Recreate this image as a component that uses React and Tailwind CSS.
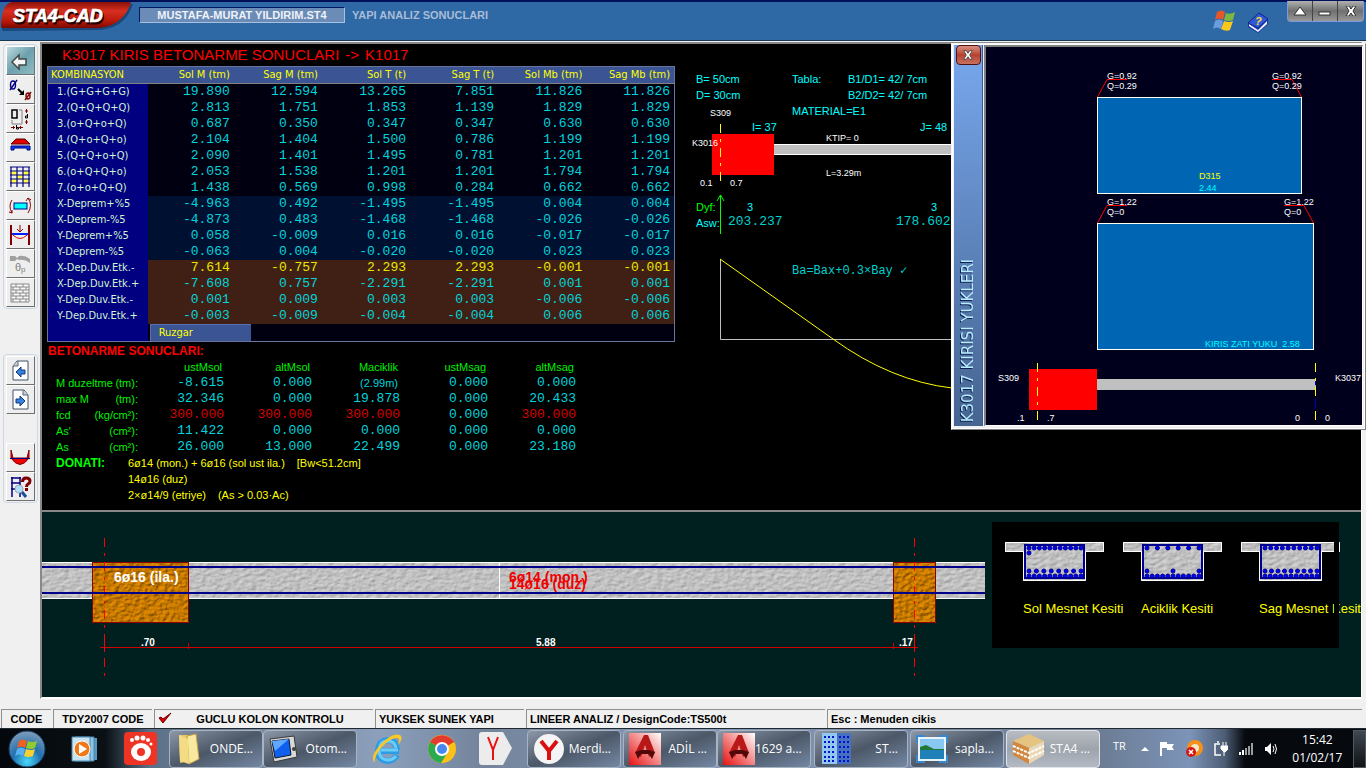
import React from "react";

const columns = ["Sol M (tm)", "Sag M (tm)", "Sol T (t)", "Sag T (t)", "Sol Mb (tm)", "Sag Mb (tm)"];

const combinations = [
  { name: "1.(G+G+G+G)", values: ["19.890", "12.594", "13.265", "7.851", "11.826", "11.826"] },
  { name: "2.(Q+Q+Q+Q)", values: ["2.813", "1.751", "1.853", "1.139", "1.829", "1.829"] },
  { name: "3.(o+Q+o+Q)", values: ["0.687", "0.350", "0.347", "0.347", "0.630", "0.630"] },
  { name: "4.(Q+o+Q+o)", values: ["2.104", "1.404", "1.500", "0.786", "1.199", "1.199"] },
  { name: "5.(Q+Q+o+Q)", values: ["2.090", "1.401", "1.495", "0.781", "1.201", "1.201"] },
  { name: "6.(o+Q+Q+o)", values: ["2.053", "1.538", "1.201", "1.201", "1.794", "1.794"] },
  { name: "7.(o+o+Q+Q)", values: ["1.438", "0.569", "0.998", "0.284", "0.662", "0.662"] },
  { name: "X-Deprem+%5", kind: "quake", values: ["-4.963", "0.492", "-1.495", "-1.495", "0.004", "0.004"] },
  { name: "X-Deprem-%5", kind: "quake", values: ["-4.873", "0.483", "-1.468", "-1.468", "-0.026", "-0.026"] },
  { name: "Y-Deprem+%5", kind: "quake", values: ["0.058", "-0.009", "0.016", "0.016", "-0.017", "-0.017"] },
  { name: "Y-Deprem-%5", kind: "quake", values: ["-0.063", "0.004", "-0.020", "-0.020", "0.023", "0.023"] },
  { name: "X-Dep.Duv.Etk.-", kind: "wall", active: true, values: ["7.614", "-0.757", "2.293", "2.293", "-0.001", "-0.001"] },
  { name: "X-Dep.Duv.Etk.+", kind: "wall", values: ["-7.608", "0.757", "-2.291", "-2.291", "0.001", "0.001"] },
  { name: "Y-Dep.Duv.Etk.-", kind: "wall", values: ["0.001", "0.009", "0.003", "0.003", "-0.006", "-0.006"] },
  { name: "Y-Dep.Duv.Etk.+", kind: "wall", values: ["-0.003", "-0.009", "-0.004", "-0.004", "0.006", "0.006"] },
];

const rowColors = {
  quake: "bg-[#001030]",
  wall: "bg-[#402014]",
};

const results = [
  { name: "M duzeltme", unit: "(tm):", values: ["-8.615", "0.000", "(2.99m)", "0.000", "0.000"] },
  { name: "max M", unit: "(tm):", values: ["32.346", "0.000", "19.878", "0.000", "20.433"] },
  { name: "fcd", unit: "(kg/cm²):", values: ["300.000", "300.000", "300.000", "0.000", "300.000"] },
  { name: "As'", unit: "(cm²):", values: ["11.422", "0.000", "0.000", "0.000", "0.000"] },
  { name: "As", unit: "(cm²):", values: ["26.000", "13.000", "22.499", "0.000", "23.180"] },
];

const sans = "font-['Liberation_Sans',sans-serif]";
const mono = "font-['Liberation_Mono',monospace]";
const tahoma = "font-['DejaVu_Sans_Condensed','DejaVu_Sans',sans-serif]";

/* ---------- header ---------- */

const Header = () => (
  <header className={`flex h-[41px] items-start border-t-2 border-b border-t-[#001058] border-b-[#183858] bg-[#2e69a6] ${sans}`}>
    <svg width="134" height="30" className="shrink-0" role="img" aria-label="STA4-CAD">
      <defs>
        <linearGradient id="logoRed" x1="0" y1="0" x2="0" y2="1">
          <stop offset="0" stopColor="#8c1008" />
          <stop offset="0.35" stopColor="#d83020" />
          <stop offset="0.75" stopColor="#b81808" />
          <stop offset="1" stopColor="#780800" />
        </linearGradient>
      </defs>
      <path d="M3 29 Q1 28 2 20 Q3 3 12 2 L133 2 Q129 15 119 22 Q109 28 96 28 Z" fill="#123a68" opacity="0.7" />
      <path d="M2 26 Q0 24 2 14 Q4 1 12 0 L131 0 Q128 12 117 20 Q108 26 95 26 Z" fill="url(#logoRed)" />
      <g fontSize="18" fontWeight="bold" fontStyle="italic">
        <text x="14" y="22" fill="#200" stroke="#200">STA4-CAD</text>
        <text x="13" y="20" fill="#fff" stroke="#fff" strokeWidth="0.7">STA4-CAD</text>
      </g>
    </svg>
    <div className="mt-[5px] ml-[5px] w-[206px] border border-t-[#001868] border-l-[#001868] border-r-[#a8c0e0] border-b-[#a8c0e0] bg-[#6c8cb8] text-center text-[11px] leading-[14px] font-bold text-[#eef2f8]">
      MUSTAFA-MURAT YILDIRIM.ST4
    </div>
    <h1 className="mt-[6px] ml-[7px] text-[11px] leading-[14px] font-bold text-[#a9bcd6]">YAPI ANALIZ SONUCLARI</h1>
    <div className="mt-[6px] ml-auto mr-[18px] flex gap-[10px]">
      <svg width="24" height="24" viewBox="0 0 24 24">
        <path d="M4 4 Q8 1 12 4 L10 12 Q6 9 2 12 Z" fill="#e8562c" />
        <path d="M13 5 Q17 7 22 4 L20 12 Q16 14 11 12 Z" fill="#7cb840" />
        <path d="M2 13 Q6 10 10 13 L8 21 Q4 18 0 21 Z" fill="#6c9ce0" />
        <path d="M11 13 Q16 15 20 13 L17 22 Q13 24 8 21 Z" fill="#f8c81c" />
      </svg>
      <svg width="22" height="24" viewBox="0 0 22 24" className="mt-[2px]">
        <path d="M1 13 L13 3 L21 9 L21 14 L11 23 L1 17 Z" fill="#1838a8" />
        <path d="M2 14 L11 20 L20 11 L20 14 L11 22 L2 16 Z" fill="#f4f4ff" />
        <path d="M1 13 L12 3 L21 9 L11 18 Z" fill="#3058d8" stroke="#102888" />
        <text x="8" y="15" fontSize="11" fontWeight="bold" fontStyle="italic" fill="#f8e020">?</text>
      </svg>
    </div>
    <div className="mr-[2px] -mt-[1px] flex h-[21px] rounded-b border border-t-0 border-[#8098e0] bg-[#383838]">
      {["up", "min", "close"].map((kind) => (
        <button
          key={kind}
          aria-label={kind}
          className="flex w-[25px] items-center justify-center border-r border-[#404448] bg-gradient-to-b from-[#b0b0b0] via-[#707070] to-[#989898] last:border-r-0"
        >
          <svg width="14" height="10" viewBox="0 0 14 10" stroke="#303030" strokeWidth="1" fill="#fff">
            {kind === "up" && <path d="M7 1 L13 9 H1 Z" />}
            {kind === "min" && <rect x="1" y="6" width="11" height="3" />}
            {kind === "close" && <path d="M2 0 H5 L7 3 L9 0 H12 L9 5 L12 10 H9 L7 7 L5 10 H2 L5 5 Z" />}
          </svg>
        </button>
      ))}
    </div>
  </header>
);

/* ---------- left tool bar ---------- */

const icons = {
  back: (
    <path d="M4 13 L11 6 V10 H18 V16 H11 V20 Z" fill="#f4f4f4" stroke="#404848" strokeWidth="1.5" />
  ),
  rename: (
    <g fill="none" strokeWidth="1.4">
      <ellipse cx="5" cy="7" rx="2.5" ry="4" stroke="#000080" />
      <path d="M2 12 L9 2" stroke="#000080" />
      <ellipse cx="20" cy="18" rx="2" ry="3" stroke="#800000" />
      <path d="M17 22 L23 14" stroke="#800000" />
      <path d="M10 11 L14 15" stroke="#000" strokeWidth="2" />
      <path d="M16 17 L11 17 L16 12 Z" fill="#000" stroke="none" />
    </g>
  ),
  section: (
    <g fill="none">
      <rect x="4" y="3" width="5" height="8" stroke="#000" strokeWidth="1.5" />
      <path d="M11 3 H14 V17 H4 V13" stroke="#808080" />
      <path d="M18.5 2 V6 M17 4 H20 M18.5 13 V17 M17 15 H20 M3 20.5 H7 M5.5 19 V22 M11 20.5 H15 M12.5 19 V22" stroke="#800000" />
      <path d="M8.5 18 V22 M8.5 20.5 H10.5 V22 H8.5" stroke="#000" />
      <path d="M19.5 7 V11 M19.5 11 H17.5 V9 H19.5" stroke="#000" />
    </g>
  ),
  slab: (
    <g>
      <path d="M3 8 L8 3 H17 L22 8 Z" fill="#e00000" stroke="#600000" />
      <path d="M3 10 H22 V14 H19 V12 H6 V14 H3 Z" fill="#0040ff" stroke="#000080" />
    </g>
  ),
  grid: (
    <g stroke="#000080" strokeWidth="1.2">
      <path d="M3 6h6v4H3z M15 6h6v4h-6z M9 10h6v4H9z M3 14h6v4H3z M15 14h6v4h-6z" fill="#ffff40" stroke="none" />
      <path d="M3 2 V22 M9 2 V22 M15 2 V22 M21 2 V22 M2 2 H22 M2 6 H22 M2 10 H22 M2 14 H22 M2 18 H22" fill="none" />
    </g>
  ),
  moment: (
    <g fill="none">
      <rect x="6" y="9" width="13" height="6" fill="#00ffff" stroke="#000080" />
      <path d="M4 6 Q0 12 4 19 M1 18 L4 19 V16 M20 4 Q25 11 20 19 M18 7 L20 4 L23 6" stroke="#900000" />
    </g>
  ),
  frame: (
    <g fill="none">
      <path d="M3 2 V22 M21 2 V22" stroke="#800000" strokeWidth="2" />
      <path d="M4 11 H20" stroke="#0020ff" strokeWidth="2" />
      <path d="M5 12 Q12 19 19 12" stroke="#e00000" />
      <path d="M12 2 V9 M9 6 L12 9 L15 6" stroke="#900000" />
    </g>
  ),
  hinge: (
    <g>
      <path d="M2 4 H7 L9 6 L11 4 Q17 3 22 7 V11 Q17 7 11 8 L9 7 L7 9 H2 Z" fill="#a0a0a0" />
      <text x="7" y="19" fontSize="11" fill="#808080">θ</text>
      <text x="13" y="20" fontSize="8" fill="#808080">p</text>
    </g>
  ),
  wall: (
    <path
      d="M3 3H21V21H3Z M3 6H21 M3 9H21 M3 12H21 M3 15H21 M3 18H21 M8 3V6 M15 3V6 M5 6V9 M12 6V9 M18 6V9 M8 9V12 M15 9V12 M5 12V15 M12 12V15 M18 12V15 M8 15V18 M15 15V18 M5 18V21 M12 18V21 M18 18V21"
      fill="#f8f8f8"
      stroke="#888"
    />
  ),
  prev: (
    <g>
      <path d="M9 2 H20 V21 H5 V7 Z" fill="#fff" stroke="#405068" />
      <path d="M5 7 H10 V2" fill="#c8d0dc" stroke="#606878" />
      <path d="M8 13 L13 8 V11 H17 V15 H13 V18 Z" fill="#3880e0" stroke="#103878" />
    </g>
  ),
  next: (
    <g>
      <path d="M5 2 H16 L20 7 V21 H5 Z" fill="#fff" stroke="#405068" />
      <path d="M15 2 V7 H20" fill="#c8d0dc" stroke="#606878" />
      <path d="M17 13 L12 8 V11 H8 V15 H12 V18 Z" fill="#3880e0" stroke="#103878" />
    </g>
  ),
  diagram: (
    <g>
      <path d="M3 4 L5 12 H19 L21 4 V12 Q12 25 3 12 Z" fill="#f00000" stroke="#800000" />
      <path d="M2 12.5 H22" stroke="#000080" />
    </g>
  ),
  query: (
    <g fill="none">
      <path d="M4 2 V22 M12 2 V22 M3 3 H13 M3 8 H12 M3 14 H10" stroke="#000080" strokeWidth="1.5" />
      <path d="M14.5 7 Q14.5 3 18 3 Q22 3 22 6 Q22 8 20 9 Q18.5 10 18.5 12" stroke="#800000" strokeWidth="3" />
      <rect x="17" y="13" width="3" height="3" fill="#800000" />
      <circle cx="11" cy="14" r="4" fill="#b0e0f8" stroke="#a0a8b0" />
      <path d="M14 17 L18 22" stroke="#1850a0" strokeWidth="3" />
    </g>
  ),
};

const ToolButton = ({ icon, active }) => (
  <button
    aria-label={icon}
    className={`flex h-[29px] w-[29px] items-center justify-center border border-t-white border-l-white border-r-[#707070] border-b-[#707070] ${sans} ${
      active ? "bg-gradient-to-br from-[#c0dce0] via-[#6ca0ac] to-[#90bcc4]" : "bg-[#eeeeee]"
    }`}
  >
    <svg width="24" height="24" viewBox="0 0 24 24">
      {icons[icon]}
    </svg>
  </button>
);

const Sidebar = () => (
  <nav className="flex w-10 shrink-0 flex-col items-center pt-[3px]">
    <div className="rounded border border-[#ccd8e4] p-px px-[2px]">
      {["back", "rename", "section", "slab", "grid", "moment", "frame", "hinge", "wall"].map((name) => (
        <ToolButton key={name} icon={name} active={name === "back"} />
      ))}
    </div>
    <div className="mt-[45px] flex flex-col gap-[29px] rounded border border-[#ccd8e4] p-px px-[2px]">
      <div>
        <ToolButton icon="prev" />
        <ToolButton icon="next" />
      </div>
      <div>
        <ToolButton icon="diagram" />
        <ToolButton icon="query" />
      </div>
    </div>
  </nav>
);

/* ---------- tables ---------- */

const CombinationTable = () => (
  <table className={`ml-[5px] w-[628px] table-fixed border-collapse border border-[#68749c] text-[11px] leading-4 ${tahoma}`}>
    <colgroup>
      <col className="w-[100px]" />
      <col className="w-[86px]" />
      <col span="5" className="w-[88px]" />
    </colgroup>
    <thead>
      <tr className="h-[17px] border-b border-[#808080] bg-[#3a5494] text-[#ffff00]">
        <th scope="col" className="pl-[3px] text-left font-normal">KOMBINASYON</th>
        {columns.map((name) => (
          <th key={name} scope="col" className="pr-1 text-right font-normal whitespace-nowrap">
            {name}
          </th>
        ))}
      </tr>
    </thead>
    <tbody>
      {combinations.map((row) => (
        <tr key={row.name} className={`h-4 ${rowColors[row.kind] || "bg-[#000010]"}`}>
          <th scope="row" className="bg-[#000080] pl-[9px] text-left font-normal whitespace-nowrap text-[#d0f4d0]">
            {row.name}
          </th>
          {row.values.map((value, i) => (
            <td
              key={i}
              className={`pr-1 text-right text-[13px] leading-4 ${mono} ${row.active ? "text-[#e8e800]" : "text-[#00d4dc]"}`}
            >
              {value}
            </td>
          ))}
        </tr>
      ))}
      <tr className="h-[17px] bg-[#000010]">
        <th className="bg-[#000080]"></th>
        <td colSpan="6" className="pl-[2px]">
          <button className="block w-[101px] border-t border-l border-[#5870b0] bg-[#3a5494] pl-2 text-left text-[#ffff00]">
            Ruzgar
          </button>
        </td>
      </tr>
    </tbody>
  </table>
);

const ResultTable = () => (
  <table className="ml-[14px] w-[522px] table-fixed border-collapse text-[11px] leading-4">
    <colgroup>
      <col className="w-[58px]" />
      <col className="w-[24px]" />
      <col span="5" className="w-[88px]" />
    </colgroup>
    <thead>
      <tr className="text-[#00f000]">
        <td colSpan="2"></td>
        {["ustMsol", "altMsol", "Maciklik", "ustMsag", "altMsag"].map((name) => (
          <th key={name} scope="col" className="pr-1 text-right font-normal">
            {name}
          </th>
        ))}
      </tr>
    </thead>
    <tbody>
      {results.map((row) => (
        <tr key={row.name}>
          <th scope="row" colSpan="2" className="text-left font-normal text-[#00f000]">
            <span className="flex justify-between whitespace-nowrap">
              <span>{row.name}</span>
              <span>{row.unit}</span>
            </span>
          </th>
          {row.values.map((value, i) => (
            <td
              key={i}
              className={`text-right leading-4 ${
                value.includes("m") ? "pr-1 text-[11px]" : `pr-[2px] text-[13px] ${mono}`
              } ${value === "300.000" ? "text-[#d80000]" : "text-[#00d4dc]"}`}
            >
              {value}
            </td>
          ))}
        </tr>
      ))}
    </tbody>
  </table>
);

/* ---------- drawings ---------- */

// elevation of the beam with moment diagram
const BeamElevation = () => (
  <svg className={`min-w-0 flex-1 ${sans}`} height="400" fontSize="11" fill="#00ffff">
    <text x="20" y="39">B= 50cm</text>
    <text x="20" y="55">D= 30cm</text>
    <text x="116" y="39">Tabla:</text>
    <text x="172" y="39">B1/D1= 42/ 7cm</text>
    <text x="172" y="55">B2/D2= 42/ 7cm</text>
    <text x="116" y="71">MATERIAL=E1</text>
    <text x="76" y="87">I= 37</text>
    <text x="244" y="87">J= 48</text>
    <rect x="36" y="90" width="62" height="41" fill="#ff0000" />
    <rect x="98" y="100" width="500" height="11" fill="#fff" />
    <rect x="98" y="101" width="500" height="9" fill="#c0c0c0" />
    <path d="M44.5 80 V137" stroke="#ffff00" strokeDasharray="9 6 3 6" />
    <g fontSize="9" fill="#fff">
      <text x="34" y="72">S309</text>
      <text x="16" y="102">K3016</text>
      <text x="150" y="97">KTIP= 0</text>
      <text x="150" y="132">L=3.29m</text>
      <text x="24" y="142">0.1</text>
      <text x="54" y="142">0.7</text>
    </g>
    <path d="M44.5 190 V151 M41 157 L44.5 151 L48 157" stroke="#00ff00" fill="none" />
    <text x="20" y="167" fill="#00ff00">Dyf:</text>
    <text x="20" y="183">Asw:</text>
    <text x="71" y="167">3</text>
    <text x="255" y="167">3</text>
    <g className={mono} fill="#00d0d0">
      <text x="52" y="181" fontSize="13">203.237</text>
      <text x="220" y="181" fontSize="13">178.602</text>
      <text x="116" y="230" fontSize="12">Ba=Bax+0.3×Bay ✓</text>
    </g>
    <path d="M44.5 215 V295.5 H600" stroke="#c0c0c0" fill="none" />
    <path d="M44 215 L157 295 Q215 337 276 344" stroke="#ffff00" fill="none" />
  </svg>
);

const LoadWindow = () => (
  <section className="absolute top-[2px] right-0 flex h-[387px] w-[415px] border border-t-[#f8f8f8] border-l-[#f8f8f8] border-r-[#808080] border-b-[#808080] bg-[#f0f0f4] p-[2px] pt-px pb-[3px] shadow-[inset_0_0_0_1px_#fff]">
    <div className="flex w-[29px] flex-col items-center justify-between border-r border-[#3858a0] bg-gradient-to-b from-[#78a8ee] to-[#466490] pb-1">
      <button
        aria-label="Kapat"
        className="flex h-5 w-[25px] items-center justify-center rounded-sm border border-[#501010] bg-gradient-to-b from-[#d89080] via-[#b84030] to-[#c87060]"
      >
        <svg width="12" height="10" viewBox="0 0 14 10" stroke="#404040" fill="#fff">
          <path d="M2 0 H5 L7 3 L9 0 H12 L9 5 L12 10 H9 L7 7 L5 10 H2 L5 5 Z" />
        </svg>
      </button>
      <h2 className="rotate-180 font-['DejaVu_Sans',sans-serif] text-[15px] leading-4 whitespace-nowrap text-[#b8ecff] [text-shadow:-1px_-1px_0_#102050] [writing-mode:vertical-rl]">
        K3017 KIRISI YUKLERI
      </h2>
    </div>
    <div className="ml-px flex-1 border-t-2 border-l-2 border-r border-b border-t-[#808080] border-l-[#808080] border-r-white border-b-white bg-[#00001c]">
      <svg width="100%" height="378" className={sans} fontSize="9" fill="#fff">
        <g stroke="#fffff0" fill="#0066b3">
          <rect x="111.5" y="50.5" width="204" height="96" />
          <rect x="111.5" y="176.5" width="216" height="126" />
        </g>
        <g stroke="#ff0000" fill="none">
          <path d="M111.5 50 L121 32.5 H141" />
          <path d="M315.5 50 L306 32.5 H286" />
          <path d="M111.5 176 L121 158.5 H141" />
          <path d="M327.5 176 L318 158.5 H298" />
        </g>
        <text x="121" y="32">G=0.92</text>
        <text x="121" y="42">Q=0.29</text>
        <text x="286" y="32">G=0.92</text>
        <text x="286" y="42">Q=0.29</text>
        <text x="121" y="158">G=1.22</text>
        <text x="121" y="168">Q=0</text>
        <text x="298" y="158">G=1.22</text>
        <text x="298" y="168">Q=0</text>
        <text x="213" y="132" fill="#ffff00">D315</text>
        <text x="213" y="144" fill="#00ffff">2.44</text>
        <text x="219" y="300" fill="#00ffff" xmlSpace="preserve">KIRIS ZATI YUKU  2.58</text>
        <rect x="43" y="322" width="68" height="41" fill="#ff0000" />
        <rect x="111" y="332" width="219" height="11" fill="#c0c0c0" />
        <path d="M51.5 316 V373 M329.5 316 V373" stroke="#ffff00" strokeDasharray="9 6 3 6" />
        <path d="M329.5 334 V338 M329.5 352 V362" stroke="#0000c0" />
        <text x="12" y="334">S309</text>
        <text x="349" y="334">K3037</text>
        <text x="31" y="374">.1</text>
        <text x="61" y="374">.7</text>
        <text x="309" y="374">0</text>
        <text x="339" y="374">0</text>
      </svg>
    </div>
  </section>
);

const Textures = () => (
  <defs>
    <filter id="concrete" x="0" y="0" width="1" height="1" colorInterpolationFilters="sRGB">
      <feTurbulence type="fractalNoise" baseFrequency="0.16 0.3" numOctaves="3" seed="4" result="noise" />
      <feDiffuseLighting in="noise" lightingColor="#dedede" surfaceScale="0.7" result="light">
        <feDistantLight azimuth="225" elevation="60" />
      </feDiffuseLighting>
      <feComposite in="light" in2="SourceGraphic" operator="in" />
    </filter>
    <filter id="column" x="0" y="0" width="1" height="1" colorInterpolationFilters="sRGB">
      <feTurbulence type="fractalNoise" baseFrequency="0.2 0.3" numOctaves="3" seed="9" result="noise" />
      <feDiffuseLighting in="noise" lightingColor="#ec9000" surfaceScale="1.5" result="light">
        <feDistantLight azimuth="225" elevation="58" />
      </feDiffuseLighting>
      <feComposite in="light" in2="SourceGraphic" operator="in" />
    </filter>
  </defs>
);

const BeamReinforcement = () => (
  <svg className={`w-[943px] shrink-0 ${sans}`} height="185" fontWeight="bold">
    <Textures />
    <rect x="0" y="50" width="943" height="37" fill="#c0c0c0" filter="url(#concrete)" />
    <path d="M0 50.5 H943 M0 86.5 H943 M457.5 50 V87" stroke="#fff" />
    <rect x="50" y="50" width="97" height="61" fill="#d08000" filter="url(#column)" />
    <rect x="851" y="50" width="43" height="61" fill="#d08000" filter="url(#column)" />
    <path d="M50.5 50.5 H146.5 V110.5 H50.5 Z M851.5 50.5 H893.5 V110.5 H851.5 Z" stroke="#900000" fill="none" />
    <path d="M62.5 26 V164 M872.5 26 V164" stroke="#ff0000" strokeDasharray="9 6 3 6" />
    <path d="M0 55 H943 M0 81 H943" stroke="#000088" strokeWidth="2" />
    <path d="M58 135.5 H876 M146.5 131 V137 M851.5 131 V137" stroke="#d00000" />
    <path d="M62.5 125 V140 M872.5 125 V140" stroke="#ff0000" />
    <text x="72" y="70" fontSize="14" fill="#fff">6ø16 (ila.)</text>
    <text x="467" y="70" fontSize="14" fill="#f00000">6ø14 (mon.)</text>
    <text x="467" y="77" fontSize="14" fill="#f00000">14ø16 (duz)</text>
    <g fontSize="10" fill="#fff">
      <text x="99" y="134">.70</text>
      <text x="494" y="134">5.88</text>
      <text x="857" y="134">.17</text>
    </g>
  </svg>
);

const sections = [
  {
    title: "Sol Mesnet Kesiti",
    bars: [
      { y: 36, count: 11 },
      { y: 41, count: 1 },
      { y: 59, count: 8 },
      { y: 64, count: 11 },
    ],
  },
  {
    title: "Aciklik Kesiti",
    bars: [
      { y: 36, count: 6 },
      { y: 59, count: 3 },
      { y: 64, count: 11 },
    ],
  },
  {
    title: "Sag Mesnet Kesiti",
    bars: [
      { y: 36, count: 10 },
      { y: 59, count: 9 },
      { y: 64, count: 11 },
    ],
  },
];

// bars are spread evenly between the two stirrup legs
const barX = (i, count) => (count === 1 ? 44 : 44 + (52 * i) / (count - 1));

const CrossSections = () => (
  <svg className={`min-w-0 flex-1 ${sans}`} height="185">
    <rect x="7" y="10" width="347" height="126" fill="#000" />
    {sections.map((section, s) => (
      <g key={section.title} transform={`translate(${s * 118} 0)`}>
        <path d="M20 30 H119 V40 H101 V69 H38 V40 H20 Z" fill="#c8c8c8" filter="url(#concrete)" />
        <path d="M20.5 30.5 H118.5 V39.5 H100.5 V68.5 H38.5 V39.5 H20.5 Z" fill="none" stroke="#fff" />
        <rect x="40" y="33" width="59" height="33" fill="none" stroke="#000090" strokeWidth="2" />
        {section.bars.map((row) =>
          Array.from({ length: row.count }, (_, i) => (
            <circle key={`${row.y}-${i}`} cx={barX(i, row.count)} cy={row.y} r="2" fill="#0000ff" stroke="#000090" />
          ))
        )}
        <text x="38" y="101" fontSize="13" fill="#ffff00">{section.title}</text>
      </g>
    ))}
    <rect x="349" y="10" width="5" height="126" fill="#000" />
  </svg>
);

/* ---------- status bar ---------- */

const cell = "border-t border-l border-[#909090]";

const StatusBar = () => (
  <footer className={`flex gap-[2px] pr-1 pl-px text-[11px] leading-[18px] font-bold text-black ${sans}`}>
    <div className={`${cell} w-[50px] text-center`}>CODE</div>
    <div className={`${cell} w-[99px] text-center whitespace-nowrap`}>TDY2007 CODE</div>
    <div className={`${cell} relative w-[219px] text-center`}>
      <svg width="14" height="12" viewBox="0 0 14 12" className="absolute top-[2px] left-[3px]">
        <path d="M1 6 L5 11 L13 1 L5 7 L3 5 Z" fill="#e00000" stroke="#700000" />
      </svg>
      <span className="pl-3">GUCLU KOLON KONTROLU</span>
    </div>
    <div className={`${cell} w-[149px] pl-[3px]`}>YUKSEK SUNEK YAPI</div>
    <div className={`${cell} w-[299px] pl-[3px]`}>LINEER ANALIZ / DesignCode:TS500t</div>
    <div className={`${cell} flex-1 pl-[3px]`}>Esc : Menuden cikis</div>
  </footer>
);

/* ---------- taskbar ---------- */

const TaskButton = ({ label, children, active }) => (
  <button
    className={`flex h-[38px] w-[94px] items-center justify-between rounded-sm border pr-[9px] pl-[5px] text-[12px] text-white ${
      active
        ? "border-[#e0e4e8] bg-gradient-to-b from-[#b8bcc2] via-[#9ea4ac] to-[#b4bac4]"
        : "border-[#a8b4c4] bg-gradient-to-br from-[#8c98a8] via-[#4c5868] to-[#7488a4]"
    }`}
  >
    {children}
    <span className="whitespace-nowrap">{label}</span>
  </button>
);

const CadIcon = () => (
  <svg width="32" height="32" viewBox="0 0 32 32" className="shrink-0">
    <defs>
      <linearGradient id="cadBg" x1="1" y1="0" x2="0" y2="1">
        <stop offset="0" stopColor="#fff" />
        <stop offset="1" stopColor="#e81010" />
      </linearGradient>
    </defs>
    <rect width="32" height="32" fill="url(#cadBg)" />
    <path d="M15 2 L19 2 L26 20 L20 24 L16 12 L12 24 L6 20 Z" fill="#b81818" />
    <path d="M6 19 L12 17 H20 L26 19 L23 26 L20 21 H12 L9 26 Z" fill="#500808" />
  </svg>
);

const Taskbar = () => (
  <div className="flex h-10 items-center border-t border-[#202830] bg-[linear-gradient(90deg,#04080c_0,#0a1014_105px,#5c7088_150px,#8ca0bc_380px,#74849c_480px,#8498b8_700px,#6c7c94_1100px,#7c94b8_1190px,#4c5c74_1225px,#060a0e_1245px,#060a0e_100%)] pl-2 font-['Open_Sans','Noto_Sans',sans-serif]">
    <button aria-label="Start">
      <svg width="38" height="38" viewBox="0 0 38 38">
        <defs>
          <radialGradient id="orb" cx="0.5" cy="0.85" r="0.8">
            <stop offset="0" stopColor="#48d8f8" />
            <stop offset="0.5" stopColor="#2070b0" />
            <stop offset="1" stopColor="#7898b8" />
          </radialGradient>
        </defs>
        <circle cx="19" cy="19" r="18" fill="url(#orb)" stroke="#18385c" />
        <path d="M11 11 Q15 8 19 11 L17 18 Q13 15 9 18 Z" fill="#f06020" />
        <path d="M20 11 Q24 13 29 11 L27 18 Q23 20 18 18 Z" fill="#90cc30" />
        <path d="M9 19 Q13 16 17 19 L15 26 Q11 23 7 26 Z" fill="#58b0f0" />
        <path d="M18 19 Q23 21 27 19 L25 26 Q21 28 16 26 Z" fill="#f8d030" />
      </svg>
    </button>
    <button aria-label="Media Player" className="ml-[25px]">
      <svg width="27" height="28" viewBox="0 0 27 28">
        <path d="M8 3 H26 V25 H8 Z" fill="#5898c0" />
        <path d="M4 2 H23 V26 H4 Z" fill="#90c4e0" stroke="#4888b0" />
        <path d="M1 2 H19 V26 H1 Z" fill="#c8e4f0" stroke="#4888b0" />
        <circle cx="11" cy="14" r="8" fill="#f07818" stroke="#fff" />
        <path d="M8 9 L16 14 L8 19 Z" fill="#fff" />
      </svg>
    </button>
    <button aria-label="GOM" className="ml-[26px]">
      <svg width="33" height="33" viewBox="0 0 33 33">
        <rect width="33" height="33" rx="4" fill="#ee3424" />
        <g fill="#fff">
          <circle cx="8" cy="8" r="2" />
          <circle cx="13" cy="6" r="2.5" />
          <circle cx="19" cy="6" r="2.5" />
          <circle cx="24" cy="8" r="2" />
          <circle cx="27" cy="12" r="1.5" />
          <ellipse cx="17" cy="20" rx="10" ry="9" />
        </g>
        <circle cx="17" cy="20" r="4" fill="#ee3424" />
      </svg>
    </button>
    <div className="ml-3 flex">
      <TaskButton label="ONDE...">
        <svg width="28" height="32" viewBox="0 0 28 32">
          <path d="M4 2 H14 L15 28 L5 30 Z" fill="#e8c860" />
          <path d="M12 3 L21 1 L24 26 L14 31 Z" fill="#f8e8a0" stroke="#c8a040" />
          <path d="M4 2 L13 6 L14 31 L5 28 Z" fill="#f4dc84" />
        </svg>
      </TaskButton>
      <TaskButton label="Otom...">
        <svg width="30" height="28" viewBox="0 0 30 28">
          <path d="M1 4 L25 1 L28 22 L5 27 Z" fill="#d8d8d8" stroke="#383838" />
          <path d="M3 6 L20 4 L22 20 L6 23 Z" fill="#1060f0" stroke="#101828" />
          <path d="M3 6 L20 4 L6 16 Z" fill="#60a8ff" />
          <circle cx="25" cy="14" r="2" fill="#404040" />
        </svg>
      </TaskButton>
    </div>
    <button aria-label="Internet Explorer" className="ml-[14px]">
      <svg width="32" height="34" viewBox="0 0 32 34">
        <path d="M28 19 H9 M26 23 Q23 29 16 29 Q7 28 7 18 Q8 9 16 8 Q25 8 26 18" fill="none" stroke="#2c9ce4" strokeWidth="6" />
        <path d="M27 18 H10 M25 24 Q22 28 16 28 Q8 27 8 18 Q9 9 16 9 Q24 9 25 16" fill="none" stroke="#6cccf8" strokeWidth="3" />
        <path d="M4 31 Q-2 26 9 13 Q21 0 29 3 Q33 6 27 13 Q30 5 25 6 Q18 7 10 16 Q2 27 4 31 Z" fill="#f8c828" />
      </svg>
    </button>
    <button aria-label="Chrome" className="ml-[24px]">
      <svg width="30" height="30" viewBox="0 0 30 30">
        <circle cx="15" cy="15" r="14" fill="#fbc116" />
        <path d="M15 15 L3 8 A14 14 0 0 1 27 8 Z" fill="#e33b2e" />
        <path d="M15 15 L3 8 A14 14 0 0 0 14 29 L21 18 Z" fill="#2da94f" />
        <path d="M15 8 H27 L24 5 Z" fill="#e33b2e" />
        <circle cx="15" cy="15" r="7" fill="#fff" />
        <circle cx="15" cy="15" r="5" fill="#4688f0" />
      </svg>
    </button>
    <button aria-label="Yandex" className="ml-[22px]">
      <svg width="33" height="33" viewBox="0 0 33 33">
        <path d="M3 0 H24 L33 16 L24 33 H3 Q0 33 0 30 V3 Q0 0 3 0 Z" fill="#ececec" />
        <path d="M9 5 L14 18 V28 M19 5 L14 18" fill="none" stroke="#e81010" strokeWidth="2" />
      </svg>
    </button>
    <div className="ml-[15px]">
      <TaskButton label="Merdi...">
        <svg width="32" height="32" viewBox="0 0 32 32" className="shrink-0">
          <circle cx="16" cy="16" r="15" fill="#f4f4f4" />
          <path d="M8 8 L16 18 V27 M24 8 L16 18" fill="none" stroke="#d81010" strokeWidth="4" />
        </svg>
      </TaskButton>
    </div>
    <div className="ml-[2px] flex">
      <TaskButton label="ADİL ...">
        <CadIcon />
      </TaskButton>
      <TaskButton label="1629 a...">
        <CadIcon />
      </TaskButton>
    </div>
    <div className="ml-[3px] flex gap-[2px]">
      <TaskButton label="ST...">
        <svg width="32" height="32" viewBox="0 0 32 32">
          <rect x="2" width="15" height="31" fill="#90c8f0" />
          <rect x="17" width="14" height="31" fill="#4870c0" />
          <path
            d="M4 4 H16 M4 9 H16 M4 14 H16 M4 19 H16 M4 24 H16 M4 28 H16 M19 4 H30 M19 9 H30 M19 14 H30 M19 19 H30 M19 24 H30 M19 28 H30"
            stroke="#0010d0"
            strokeWidth="2"
            strokeDasharray="2 2"
          />
        </svg>
      </TaskButton>
      <TaskButton label="sapla...">
        <svg width="32" height="28" viewBox="0 0 32 28">
          <path d="M1 8 V1 H9 M23 1 H31 V8 M31 20 V27 H23 M9 27 H1 V20" fill="none" stroke="#3888d0" strokeWidth="3" />
          <rect x="2" y="2" width="28" height="24" fill="#e8f4fc" />
          <rect x="4" y="4" width="24" height="20" fill="#88c8f0" />
          <path d="M4 12 L10 10 L18 14 H28 V16 H4 Z" fill="#207838" />
          <rect x="4" y="15" width="24" height="9" fill="#2080b8" />
        </svg>
      </TaskButton>
      <TaskButton label="STA4 ..." active>
        <svg width="33" height="32" viewBox="0 0 33 32">
          <path d="M1 8 L17 1 L32 8 L17 15 Z" fill="#e4c480" />
          <path d="M1 8 L17 15 V31 L1 22 Z" fill="#d08840" />
          <path d="M32 8 L17 15 V31 L32 22 Z" fill="#e8d8b8" />
          <path d="M1 13 L17 20 L32 13 M1 18 L17 25 L32 18" fill="none" stroke="#fff" strokeDasharray="3 1" strokeWidth="2" />
        </svg>
      </TaskButton>
    </div>
    <div className="ml-[13px] flex flex-1 items-center justify-between text-[11px] text-white">
      <span className="pb-1">TR</span>
      <svg width="8" height="4" viewBox="0 0 8 4" className="ml-1">
        <path d="M4 0 L8 4 H0 Z" fill="#fff" />
      </svg>
      <svg width="16" height="15" viewBox="0 0 16 15">
        <path d="M2 1 V15" stroke="#fff" strokeWidth="2" />
        <path d="M3 1 H8 V3 H15 L13 6 L15 9 H8 V7 H3 Z" fill="#fff" />
      </svg>
      <svg width="17" height="17" viewBox="0 0 17 17">
        <circle cx="9" cy="8" r="6" fill="none" stroke="#f89018" strokeWidth="4" />
        <circle cx="9" cy="8" r="4" fill="#fce8c0" />
        <circle cx="5" cy="12" r="5" fill="#d01818" />
        <path d="M3 10 L7 14 M7 10 L3 14" stroke="#fff" strokeWidth="1.5" />
      </svg>
      <svg width="15" height="16" viewBox="0 0 15 16" fill="none" stroke="#fff">
        <path d="M8 14 H2 V3 H7 M4 1 H6" strokeWidth="1.5" />
        <path d="M8 5 H15 V8 L12 11 H11 L8 8 Z" fill="#fff" />
        <path d="M10 1 V5 M13 1 V5 M11 11 V15" />
      </svg>
      <svg width="15" height="12" viewBox="0 0 15 12" fill="#fff">
        <path d="M0 9h2v3H0z M3 7h2v5H3z" />
        <path d="M6 5h2v7H6z M9 3h2v9H9z M12 0h2v12h-2z" opacity="0.6" />
      </svg>
      <svg width="13" height="14" viewBox="0 0 13 14">
        <path d="M0 5 H2 L6 1 V13 L2 9 H0 Z" fill="#fff" />
        <path d="M8 4 Q10 7 8 10 M10 2 Q13 7 10 12" stroke="#fff" fill="none" />
      </svg>
      <div className="ml-1 text-center text-[12px] leading-[18px]">
        <div>15:42</div>
        <div>01/02/17</div>
      </div>
      <button aria-label="Show desktop" className="h-[38px] w-[13px] border border-[#505860] bg-gradient-to-b from-[#404850] to-[#101418]"></button>
    </div>
  </div>
);

const App = () => {
  return (
    <div className="flex min-h-screen w-full flex-col overflow-hidden bg-[#f0f0f0]">
      <Header />
      <div className="relative flex flex-1">
        <Sidebar />
        <main className="mt-px mr-1 mb-[10px] flex min-w-0 flex-1 flex-col border-2 border-r border-t-[#888888] border-l-[#888888] border-r-white border-b-white bg-black">
          <div className={`flex min-h-0 flex-1 ${sans}`}>
            <div className="w-[634px] shrink-0">
              <h2 className="flex gap-[6px] pt-[2px] pb-[2px] pl-5 text-[15px] leading-[18px] text-[#ff0000]">
                <span>K3017 KIRIS BETONARME SONUCLARI</span>
                <span>-&gt;</span>
                <span>K1017</span>
              </h2>
              <CombinationTable />
              <h3 className="mt-[1px] pl-[6px] text-[12px] leading-4 font-bold text-[#ff0000]">BETONARME SONUCLARI:</h3>
              <ResultTable />
              <div className="flex pl-[14px] text-[11px] leading-4 text-[#ffff00]">
                <h3 className="w-[72px] text-[12px] font-bold text-[#00ff00]">DONATI:</h3>
                <ul>
                  <li className="flex gap-3">
                    <span>6ø14 (mon.) + 6ø16 (sol ust ila.)</span>
                    <span>[Bw&lt;51.2cm]</span>
                  </li>
                  <li>14ø16 (duz)</li>
                  <li className="flex gap-3">
                    <span>2×ø14/9 (etriye)</span>
                    <span>(As &gt; 0.03·Ac)</span>
                  </li>
                </ul>
              </div>
            </div>
            <BeamElevation />
          </div>
          <div className="flex border-t-2 border-[#888888] bg-[#002020]">
            <BeamReinforcement />
            <CrossSections />
          </div>
        </main>
        <LoadWindow />
      </div>
      <StatusBar />
      <Taskbar />
    </div>
  );
};

export default App;
